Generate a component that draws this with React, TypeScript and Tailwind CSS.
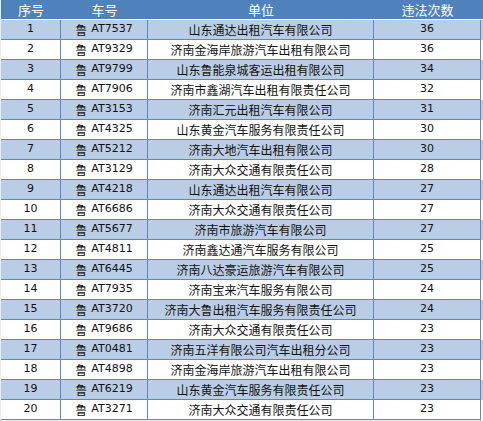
const rows: [number, string, string, number][] = [
  [1, 'AT7537', '山东通达出租汽车有限公司', 36],
  [2, 'AT9329', '济南金海岸旅游汽车出租有限公司', 36],
  [3, 'AT9799', '山东鲁能泉城客运出租有限公司', 34],
  [4, 'AT7906', '济南市鑫湖汽车出租有限责任公司', 32],
  [5, 'AT3153', '济南汇元出租汽车有限公司', 31],
  [6, 'AT4325', '山东黄金汽车服务有限责任公司', 30],
  [7, 'AT5212', '济南大地汽车出租有限公司', 30],
  [8, 'AT3129', '济南大众交通有限责任公司', 28],
  [9, 'AT4218', '山东通达出租汽车有限公司', 27],
  [10, 'AT6686', '济南大众交通有限责任公司', 27],
  [11, 'AT5677', '济南市旅游汽车有限公司', 27],
  [12, 'AT4811', '济南鑫达通汽车服务有限公司', 25],
  [13, 'AT6445', '济南八达豪运旅游汽车有限公司', 25],
  [14, 'AT7935', '济南宝来汽车服务有限公司', 24],
  [15, 'AT3720', '济南大鲁出租汽车服务有限责任公司', 24],
  [16, 'AT9686', '济南大众交通有限责任公司', 23],
  [17, 'AT0481', '济南五洋有限公司汽车出租分公司', 23],
  [18, 'AT4898', '济南金海岸旅游汽车出租有限公司', 23],
  [19, 'AT6219', '山东黄金汽车服务有限责任公司', 23],
  [20, 'AT3271', '济南大众交通有限责任公司', 23],
];

const cols = 'grid grid-cols-[60px_87px_226px_107px]';
const cell = 'flex items-center justify-center border-r border-b border-[#5b89c3] h-[20px]';
const latin = 'font-["DejaVu_Sans","Noto_Sans_CJK_SC",sans-serif] text-[11px]';
const cjk = 'font-["Noto_Sans_CJK_SC",sans-serif] text-[12px]';

export default function App() {
  return (
    <div className="w-[483px] h-[421px] bg-[#e8edf3] pl-px overflow-hidden text-[#111]">
      <div className={`${cols} bg-[#4f81bd] text-white h-[20px] border-b border-white ${cjk} text-[13px]`}>
        <div className="flex items-center justify-center">序号</div>
        <div className="flex items-center justify-center">车号</div>
        <div className="flex items-center justify-center">单位</div>
        <div className="flex items-center justify-center">违法次数</div>
      </div>
      {rows.map(([no, plate, unit, count]) => (
        <div key={no} className={`${cols} ${no % 2 === 1 ? 'bg-[#b9cde5]' : 'bg-white'}`}>
          <div className={`${cell} ${latin}`}>{no}</div>
          <div className={`${cell} ${latin}`}>
            <span className={cjk}>鲁</span>
            <span className="ml-[4px]">{plate}</span>
          </div>
          <div className={`${cell} ${cjk}`}>{unit}</div>
          <div className={`${cell} ${latin}`}>{count}</div>
        </div>
      ))}
    </div>
  );
}
